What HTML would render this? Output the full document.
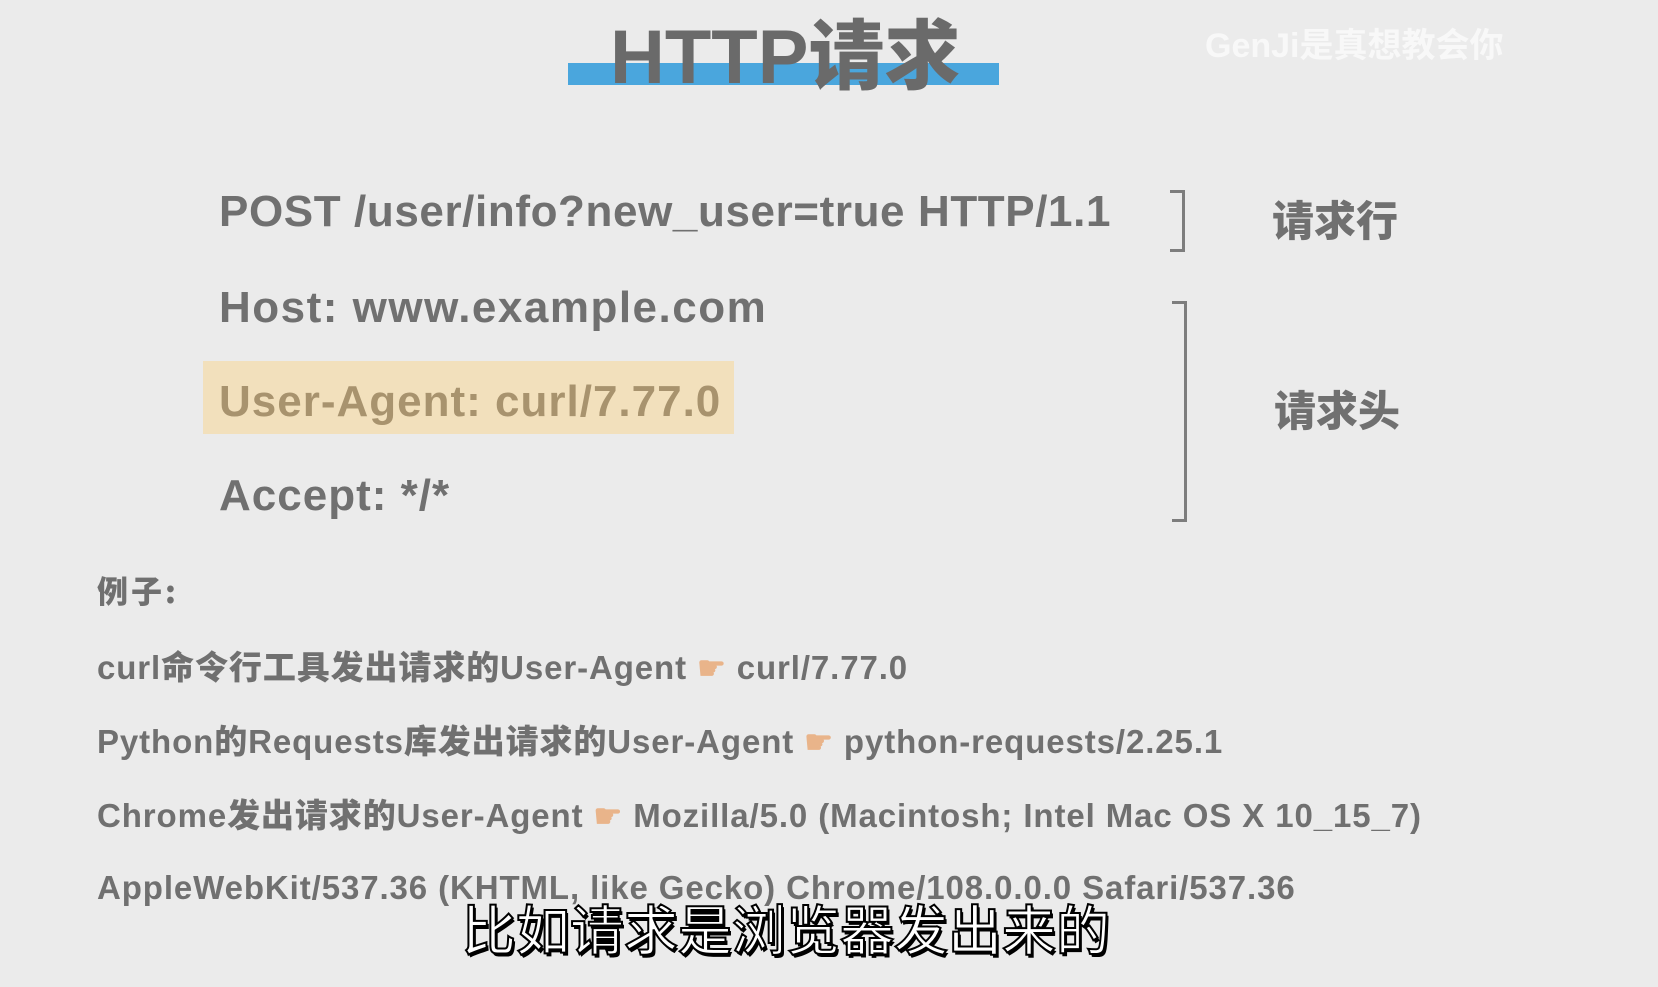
<!DOCTYPE html>
<html><head><meta charset="utf-8"><style>
html,body{margin:0;padding:0;}
body{width:1658px;height:987px;background:#ebebeb;position:relative;overflow:hidden;font-family:"Liberation Sans","Noto Sans CJK SC",sans-serif;font-weight:bold;color:#707070;}
.a{position:absolute;white-space:nowrap;line-height:1;}
.big{font-size:44px;letter-spacing:0.6px;}
.sm{font-size:33px;letter-spacing:0.9px;}
.cj{font-family:"Noto Sans CJK SC",sans-serif;font-weight:900;}
.hand{color:#e9b48a;font-size:32px;}
</style></head><body>
<div style="position:absolute;left:568px;top:63px;width:431px;height:22px;background:#4aa6dd"></div>
<div class="a" style="left:610px;top:12px;font-size:76px;font-family:'Liberation Sans','Noto Sans CJK SC',sans-serif;font-weight:900;color:#6a6a6a">HTTP<span class="cj">请求</span></div>
<div class="a" style="left:1205px;top:26px;font-size:34px;color:#f8f8f8;font-family:'Liberation Sans','Noto Sans CJK SC',sans-serif;">GenJi<span style="font-family:'Noto Sans CJK SC',sans-serif">是真想教会你</span></div>

<div class="a big" style="left:219px;top:190px">POST /user/info?new_user=true HTTP/1.1</div>
<div class="a big" style="left:219px;top:286px;letter-spacing:1.5px">Host: www.example.com</div>
<div style="position:absolute;left:203px;top:361px;width:531px;height:73px;background:#f2e0bc"></div>
<div class="a big" style="left:219px;top:380px;color:#a8936e;letter-spacing:1px">User-Agent: curl/7.77.0</div>
<div class="a big" style="left:219px;top:474px;letter-spacing:1px">Accept: */*</div>

<div style="position:absolute;left:1170px;top:190px;width:12px;height:56px;border:3px solid #7d7d7d;border-left:none"></div>
<div style="position:absolute;left:1172px;top:301px;width:12px;height:215px;border:3px solid #7d7d7d;border-left:none"></div>
<div class="a cj" style="left:1272px;top:198px;font-size:42px">请求行</div>
<div class="a cj" style="left:1274px;top:388px;font-size:42px">请求头</div>

<div class="a cj" style="left:97px;top:574px;font-size:31px;letter-spacing:3px">例子:</div>
<div class="a sm" style="left:97px;top:649px">curl<span class="cj">命令行工具发出请求的</span>User-Agent <span class="hand">☛</span> curl/7.77.0</div>
<div class="a sm" style="left:97px;top:723px">Python<span class="cj">的</span>Requests<span class="cj">库发出请求的</span>User-Agent <span class="hand">☛</span> python-requests/2.25.1</div>
<div class="a sm" style="left:97px;top:797px">Chrome<span class="cj">发出请求的</span>User-Agent <span class="hand">☛</span> Mozilla/5.0 (Macintosh; Intel Mac OS X 10_15_7)</div>
<div class="a sm" style="left:97px;top:871px">AppleWebKit/537.36 (KHTML, like Gecko) Chrome/108.0.0.0 Safari/537.36</div>

<div class="a" style="left:462px;top:900px;font-size:54px;font-family:'Noto Sans CJK SC',sans-serif;font-weight:500;color:#fff;-webkit-text-stroke:2px #000;text-shadow:2px 3px 0 #000;">比如请求是浏览器发出来的</div>
</body></html>
